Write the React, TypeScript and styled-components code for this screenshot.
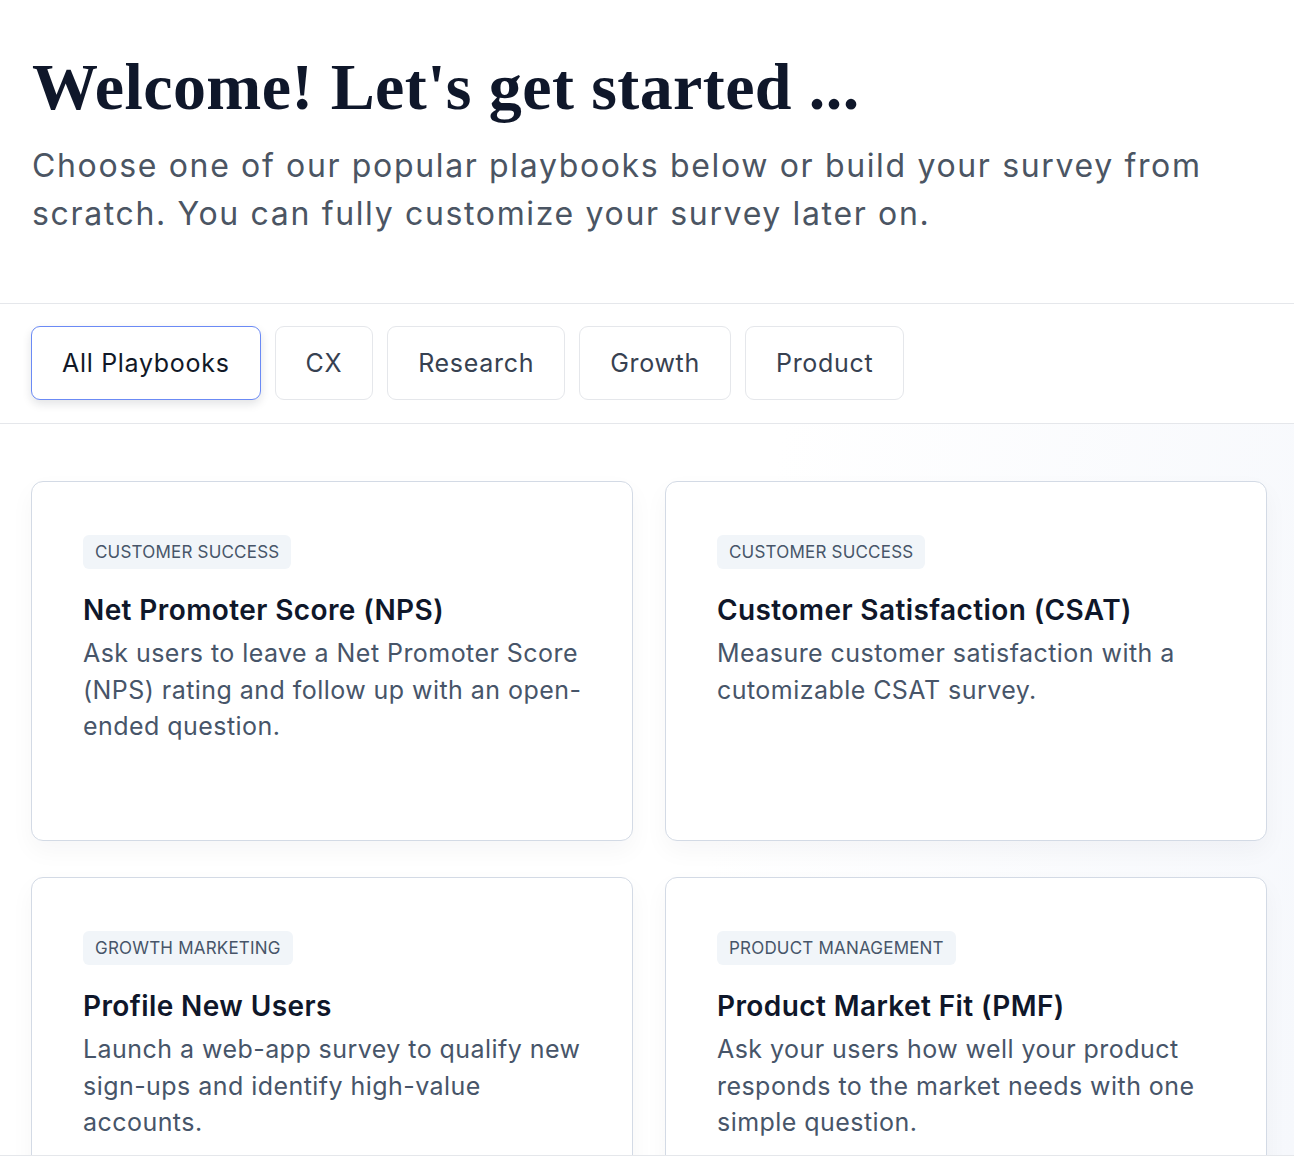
import React, { useState } from 'react';
import styled, { createGlobalStyle } from 'styled-components';

type Playbook = {
	tag: string
	title: string
	description: string
}

const TABS = ['All Playbooks', 'CX', 'Research', 'Growth', 'Product'];

const PLAYBOOKS: Playbook[] = [
	{
		tag: 'Customer Success',
		title: 'Net Promoter Score (NPS)',
		description: 'Ask users to leave a Net Promoter Score (NPS) rating and follow up with an open-ended question.',
	},
	{
		tag: 'Customer Success',
		title: 'Customer Satisfaction (CSAT)',
		description: 'Measure customer satisfaction with a cutomizable CSAT survey.',
	},
	{
		tag: 'Growth Marketing',
		title: 'Profile New Users',
		description: 'Launch a web-app survey to qualify new sign-ups and identify high-value accounts.',
	},
	{
		tag: 'Product Management',
		title: 'Product Market Fit (PMF)',
		description: 'Ask your users how well your product responds to the market needs with one simple question.',
	},
];

const App = () => {
	const [active, setActive] = useState('All Playbooks');

	return (
		<>
			<GlobalStyle />
			<Page>
				<Header>
					<Title>Welcome! Let's get started ...</Title>
					<Subtitle>
						Choose one of our popular playbooks below or build your survey from scratch. You can fully customize your survey later on.
					</Subtitle>
				</Header>

				<TabBar>
					{TABS.map((tab) => (
						<Tab key={tab} $active={tab === active} onClick={() => setActive(tab)}>
							{tab}
						</Tab>
					))}
				</TabBar>

				<CardArea>
					<CardGrid>
						{PLAYBOOKS.map((p) => (
							<Card key={p.title}>
								<Tag>{p.tag}</Tag>
								<CardTitle>{p.title}</CardTitle>
								<CardText>{p.description}</CardText>
							</Card>
						))}
					</CardGrid>
				</CardArea>
			</Page>
		</>
	)
}

const GlobalStyle = createGlobalStyle`
	body {
		margin: 0;
		background: #ffffff;
		font-family: Inter, "Noto Sans", sans-serif;
		-webkit-font-smoothing: antialiased;
	}
`;

const Page = styled.div`
	width: 1294px;
	height: 1170px;
	overflow: hidden;
	background: #ffffff;
`;

const Header = styled.div`
	padding: 49px 32px 65px 32px;
`;

const Title = styled.h1`
	margin: 0;
	font-family: "Liberation Serif", "DejaVu Serif", serif;
	font-weight: 700;
	font-size: 66px;
	line-height: 76px;
	letter-spacing: 0.4px;
	color: #0f172a;
`;

const Subtitle = styled.p`
	margin: 17px 0 0 0;
	font-size: 32px;
	line-height: 48px;
	letter-spacing: 1.65px;
	color: #4b5563;
	max-width: 1220px;
`;

const TabBar = styled.div`
	display: flex;
	gap: 14px;
	padding: 22px 31px 23px 31px;
	border-top: 1px solid #e5e7eb;
	border-bottom: 1px solid #e5e7eb;
`;

const Tab = styled.button<{ $active: boolean }>`
	height: 74px;
	padding: 0 30px;
	font-family: Inter, "Noto Sans", sans-serif;
	font-size: 25px;
	letter-spacing: 0.7px;
	color: ${({ $active }) => ($active ? '#111827' : '#374151')};
	background: #ffffff;
	border: 1px solid ${({ $active }) => ($active ? '#6b8af5' : '#e5e7eb')};
	border-radius: 9px;
	box-shadow: ${({ $active }) => ($active ? '0 4px 10px rgba(15, 23, 42, 0.12)' : 'none')};
	cursor: pointer;
`;

const CardArea = styled.div`
	height: 732px;
	overflow: hidden;
	padding: 57px 27px 0 31px;
	box-sizing: border-box;
	background: linear-gradient(100deg, #ffffff 55%, #f6f8fc 100%);
	border-bottom: 1px solid #e5e7eb;
`;

const CardGrid = styled.div`
	display: grid;
	grid-template-columns: 602px 602px;
	column-gap: 32px;
	row-gap: 36px;
`;

const Card = styled.div`
	height: 360px;
	box-sizing: border-box;
	padding: 53px 45px 0 51px;
	background: #ffffff;
	border: 1px solid #d3dae5;
	border-radius: 12px;
	box-shadow: 0 10px 24px rgba(15, 23, 42, 0.04);
`;

const Tag = styled.span`
	display: inline-block;
	padding: 0 12px;
	height: 34px;
	line-height: 34px;
	font-size: 17px;
	letter-spacing: 0.2px;
	text-transform: uppercase;
	color: #475569;
	background: #f1f5f9;
	border-radius: 6px;
`;

const CardTitle = styled.h2`
	margin: 22px 0 0 0;
	font-size: 28px;
	line-height: 38px;
	font-weight: 600;
	letter-spacing: 0.4px;
	color: #0f172a;
`;

const CardText = styled.p`
	margin: 6px 0 0 0;
	font-size: 25px;
	line-height: 36.5px;
	letter-spacing: 0.45px;
	color: #475569;
`;

export default App;
